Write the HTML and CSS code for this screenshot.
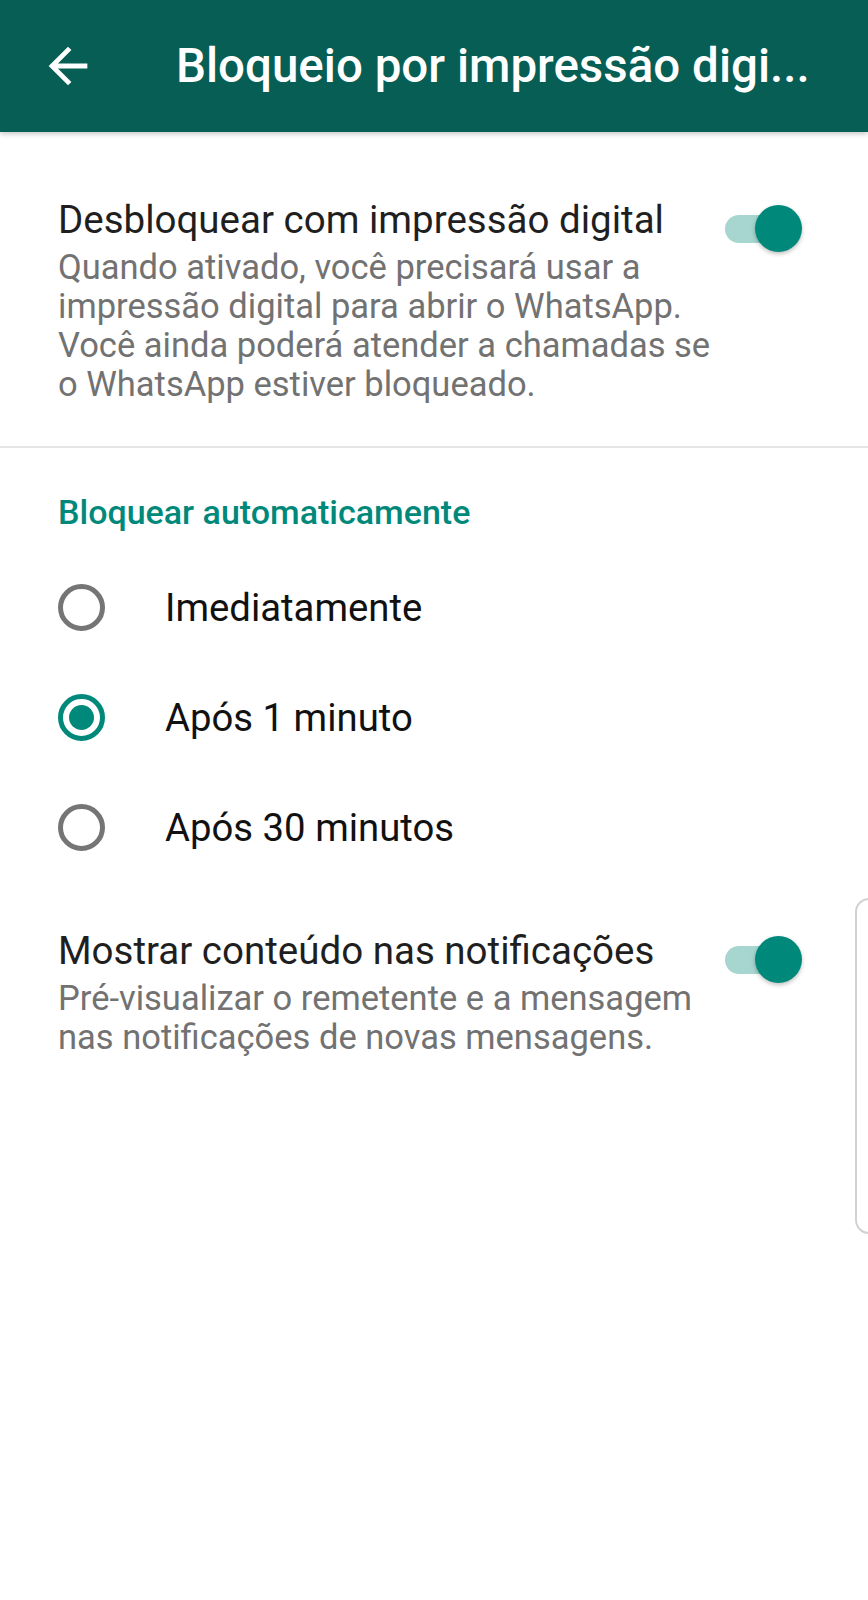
FILE: index.html
```html
<!doctype html>
<html lang="pt-BR">
<head>
<meta charset="utf-8">
<title>Bloqueio por impressão digital</title>
<meta name="viewport" content="width=device-width, initial-scale=1">
<link rel="stylesheet" href="styles.css">
</head>
<body>

<header class="appbar">
  <svg class="appbar-back" viewBox="0 0 24 24" aria-label="Voltar">
    <path d="M20 11H7.83l5.59-5.59L12 4l-8 8 8 8 1.41-1.41L7.83 13H20v-2z"/>
  </svg>
  <h1 class="appbar-title">Bloqueio por impressão digi...</h1>
</header>

<main>
  <section class="pref pref-first">
    <div class="pref-text">
      <div class="pref-title">Desbloquear com impressão digital</div>
      <div class="pref-summary">Quando ativado, você precisará usar a impressão digital para abrir o WhatsApp. Você ainda poderá atender a chamadas se o WhatsApp estiver bloqueado.</div>
    </div>
    <span class="switch on"><span class="switch-track"></span><span class="switch-thumb"></span></span>
  </section>

  <hr class="divider">

  <h2 class="category">Bloquear automaticamente</h2>

  <ul class="radios">
    <li class="radio-row"><span class="radio"></span>Imediatamente</li>
    <li class="radio-row"><span class="radio checked"></span>Após 1 minuto</li>
    <li class="radio-row"><span class="radio"></span>Após 30 minutos</li>
  </ul>

  <section class="pref">
    <div class="pref-text">
      <div class="pref-title">Mostrar conteúdo nas notificações</div>
      <div class="pref-summary">Pré-visualizar o remetente e a mensagem nas notificações de novas mensagens.</div>
    </div>
    <span class="switch on"><span class="switch-track"></span><span class="switch-thumb"></span></span>
  </section>
</main>

<!-- edge panel handle -->
<div class="edge-handle"></div>

</body>
</html>
```

FILE: styles.css
```css
:root{--bar:#075e54;--teal:#00897b;--track:#a6d6cf;--text:#1f1f1f;--sub:#727272;}
html,body{margin:0;background:#fff;}
body{font-family:Roboto,"Noto Sans",Arial,sans-serif;color:var(--text);position:relative;min-height:1600px;}

/* toolbar */
.appbar{height:132px;background:var(--bar);display:flex;align-items:center;padding-left:39px;box-shadow:0 2px 5px rgba(0,0,0,.22);position:relative;}
.appbar-back{width:58px;height:58px;fill:#fff;flex:none;}
.appbar-title{margin:0 0 0 79px;font-size:47.5px;font-weight:500;color:#fff;white-space:nowrap;}

/* switch preferences */
.pref{display:flex;align-items:flex-start;padding:0 66px 0 58px;}
.pref-first{padding-top:65px;padding-bottom:42px;}
.pref-text{flex:1;max-width:665px;}
.pref-title{font-size:38.5px;line-height:46px;}
.pref-summary{margin-top:5px;font-size:34.5px;line-height:39px;color:var(--sub);}

.switch{position:relative;width:77px;height:47px;margin:8px 0 0 auto;flex:none;}
.switch-track{position:absolute;left:0;right:8px;top:10px;height:28px;border-radius:14px;background:var(--track);}
.switch-thumb{position:absolute;right:0;top:0;width:47px;height:47px;border-radius:50%;background:var(--teal);box-shadow:0 2px 4px rgba(0,0,0,.25);}

.divider{margin:0;border:0;border-top:2px solid #e6e6e6;}

/* category + radio list */
.category{margin:45px 0 0 58px;font-size:34px;line-height:39px;font-weight:500;color:var(--teal);}
.radios{list-style:none;margin:20px 0 46px;padding:0;}
.radio-row{height:110px;display:flex;align-items:center;padding-left:58px;font-size:38.3px;color:#111;}
.radio{box-sizing:border-box;width:47px;height:47px;border:5px solid #757575;border-radius:50%;margin-right:60px;display:flex;align-items:center;justify-content:center;}
.radio.checked{border-color:var(--teal);}
.radio.checked::after{content:"";width:25px;height:25px;border-radius:50%;background:var(--teal);}

/* samsung edge panel handle */
.edge-handle{position:absolute;left:855px;top:898px;width:30px;height:336px;box-sizing:border-box;border:2px solid #d2d2d2;border-radius:14px;}
```
